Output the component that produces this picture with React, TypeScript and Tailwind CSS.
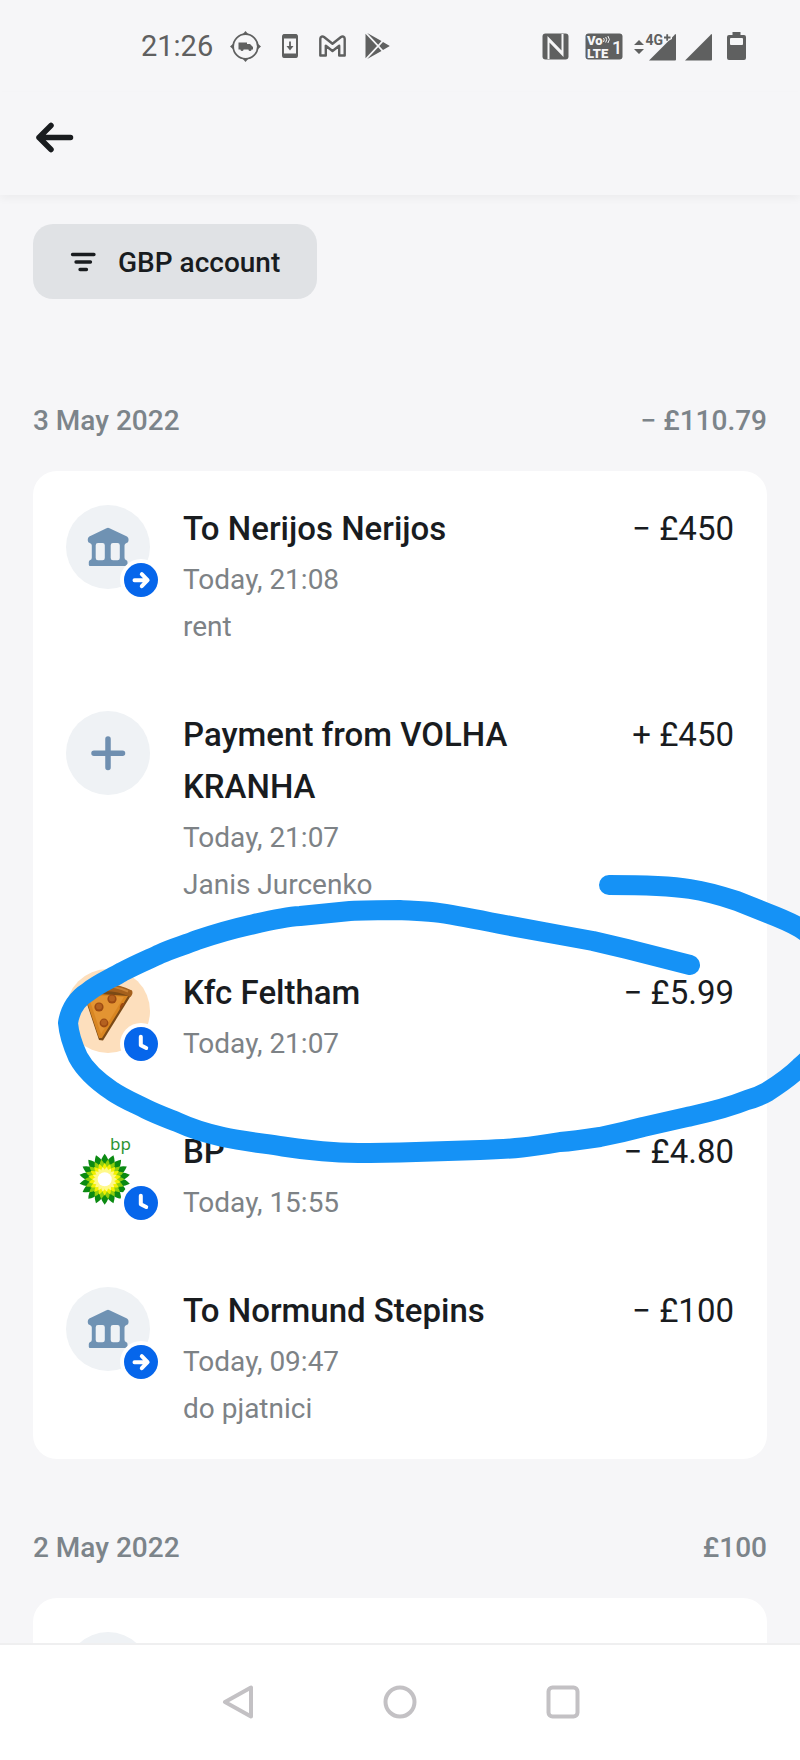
import React from 'react';

type AvatarKind = 'bank' | 'plus' | 'pizza' | 'bp';
type BadgeKind = 'arrow' | 'clock';

interface Transaction {
  title: string;
  time: string;
  note?: string;
  amount: string;
  avatar: AvatarKind;
  badge?: BadgeKind;
}

const transactions: Transaction[] = [
  { title: 'To Nerijos Nerijos', time: 'Today, 21:08', note: 'rent', amount: '− £450', avatar: 'bank', badge: 'arrow' },
  { title: 'Payment from VOLHA KRANHA', time: 'Today, 21:07', note: 'Janis Jurcenko', amount: '+ £450', avatar: 'plus' },
  { title: 'Kfc Feltham', time: 'Today, 21:07', amount: '− £5.99', avatar: 'pizza', badge: 'clock' },
  { title: 'BP', time: 'Today, 15:55', amount: '− £4.80', avatar: 'bp', badge: 'clock' },
  { title: 'To Normund Stepins', time: 'Today, 09:47', note: 'do pjatnici', amount: '− £100', avatar: 'bank', badge: 'arrow' }
];

const StatusBar = () => (
  <div className="flex h-[92px] flex-shrink-0 items-center justify-between pl-[141px] pr-[54px] text-[#5f6060]">
    <div className="flex items-center">
      <span className="text-[29px] leading-[40px]">21:26</span>
      {/* Delivery tracker */}
      <svg className="ml-[17px] h-[31px] w-[31px]" viewBox="0 0 31 31" fill="currentColor">
        <circle cx="15.5" cy="15.5" r="12.3" fill="none" stroke="currentColor" strokeWidth="1.7" />
        <path d="M15.5 0 19 4h-7zM15.5 31l3.5-4h-7zM0 15.5 4 12v7zM31 15.5 27 12v7z" />
        <path d="M8.500 11.500h8.500v1.500h3l3 3v2.500H8.500z" />
        <circle cx="12" cy="18.500" r="1.500" />
        <circle cx="20" cy="18.500" r="1.500" />
      </svg>
      {/* System update */}
      <svg className="ml-[21px] h-6 w-4" viewBox="0 0 16 24" fill="none" stroke="currentColor">
        <rect x="1" y="1" width="14" height="22" rx="1.5" strokeWidth="2" />
        <path d="M1 2.500h14M1 21.500h14" strokeWidth="4" />
        <path d="M8 7.500v7" strokeWidth="1.800" />
        <path d="M4.500 12h7L8 16.500z" fill="currentColor" stroke="none" />
      </svg>
      {/* Gmail */}
      <svg className="ml-[21px] h-[22px] w-[27px]" viewBox="0 0 27 22" fill="none" stroke="currentColor" strokeWidth="2.400" strokeLinejoin="round">
        <path d="M1.300 3.800C1.300 1.600 3.500.9 5 2l8.500 6.800L22 2c1.500-1.100 3.700-.4 3.700 1.800V20.500h-5.500V10.800l-6.700 5.200-6.700-5.200V20.500H1.300z" />
      </svg>
      {/* Play Store */}
      <svg className="ml-[19px] h-[26px] w-[25px]" viewBox="0 0 25 26" fill="currentColor">
        <path d="M.5.8v24.400L12 13zM2.200 0 16.500 8l-3.300 3.700zM2.200 26 16.500 18l-3.300-3.700zM18 9l6.800 4-6.800 4-3.700-4z" />
      </svg>
    </div>

    <div className="flex items-center">
      {/* NFC */}
      <svg className="h-[27px] w-[27px]" viewBox="0 0 27 27">
        <rect x=".5" y=".5" width="26" height="26" rx="3" fill="currentColor" />
        <path d="M6.500 26V5.500l13.500 14M20.500 1v20.500L7 7.500" fill="none" stroke="#f6f6f7" strokeWidth="2" />
      </svg>
      {/* VoLTE */}
      <svg className="ml-4 h-[27px] w-[38px]" viewBox="0 0 38 27">
        <rect x=".5" y=".5" width="37" height="26" rx="3" fill="currentColor" />
        <g fill="#f6f6f7" fontFamily="Roboto, sans-serif" fontWeight="900">
          <text x="2" y="12" fontSize="13">Vo</text>
          <text x="2" y="25" fontSize="13">LTE</text>
          <text x="27" y="20.500" fontSize="18" fontWeight="500">1</text>
        </g>
        <path d="M18.500 5q1.500 1.500 0 4M20.700 4q2 2.500 0 5.500M22.900 3q3 3.500 0 7" fill="none" stroke="#f6f6f7" strokeWidth="1" />
      </svg>
      {/* Mobile data and both SIM signals */}
      <svg className="ml-[10px] h-[29px] w-[80px]" viewBox="0 0 80 29" fill="currentColor">
        <path d="M1 13 6 8l5 5zM1 17l5 5 5-5z" />
        <path d="M16 28.500 42 2.500q1-1 1 0V27.500q0 1-1 1z" />
        <path d="M33 10V0h6v7z" fill="#f6f6f7" />
        <text x="12.500" y="12.500" fontSize="14" fontWeight="700" fontFamily="Roboto, sans-serif">4G</text>
        <path d="M31 5.500h6.500M34.200 2.200v6.600" stroke="currentColor" strokeWidth="1.800" />
        <path d="M52 28.500 78 2.500q1-1 1 0V27.500q0 1-1 1z" />
      </svg>
      {/* Battery */}
      <svg className="ml-[14px] h-[28px] w-[19px]" viewBox="0 0 19 28">
        <path d="M5.500 0h8v3H17q2 0 2 2v21q0 2-2 2H2q-2 0-2-2V5q0-2 2-2h3.500z" fill="currentColor" />
        <rect x="3" y="6" width="13" height="7" rx="1" fill="#f6f6f7" />
      </svg>
    </div>
  </div>
);

const BankIcon = () => (
  <svg className="h-[84px] w-[84px]" viewBox="0 0 84 84">
    <path
      d="M40.500 23.200q1.500-.8 3 0L61 31.500q1.500 1 1.500 2.600v1.400q0 2-2 2.500-2 .5-2 2.500V52.500q0 2 1.500 2.500t1.500 2V59.800q0 1.200-1.200 1.200H24q-1.200 0-1.200-1.200V57q0-1.500 1.500-2t1.500-2.500V40.500q0-2-2-2.500t-2-2.500V34.100q0-1.600 1.500-2.600z"
      fill="#6f92b3"
    />
    <path d="M32 38h4.500q2.300 0 2.300 2.300V53q0 2.300-2.300 2.300H32q-2.300 0-2.300-2.300V40.300q0-2.300 2.300-2.300zM47 38h4.500q2.300 0 2.300 2.300V53q0 2.300-2.300 2.300H47q-2.300 0-2.300-2.300V40.300q0-2.300 2.300-2.300z" fill="#eff2f5" />
  </svg>
);

const PlusIcon = () => (
  <svg className="h-[84px] w-[84px]" viewBox="0 0 84 84" fill="none" stroke="#6f8fb0" strokeWidth="5.500" strokeLinecap="round">
    <path d="M42 28v28.500M28 42.200h28.500" />
  </svg>
);

const PizzaIcon = () => (
  <svg className="h-[84px] w-[84px]" viewBox="0 0 84 84">
    <path d="M16 20Q40 10 66 22L64 28 37 71.500 33 71z" fill="#7b4a16" />
    <path d="M18 24 62 27 36 69 33 69z" fill="#d98622" />
    <path d="M22 26 58 28 35 65z" fill="#e39432" />
    <path d="M15 22Q40 9 66 21.500q1.500 3-1.500 6.500Q42 17 17 26z" fill="#a5601c" />
    <path d="M20 20Q40 13 62 22.500" fill="none" stroke="#c98236" strokeWidth="2" />
    <g fill="#9c4a12">
      <circle cx="46" cy="30" r="4.600" />
      <circle cx="33" cy="38" r="4.600" />
      <circle cx="38" cy="54" r="4.400" />
      <path d="M56 34q-3 3-2 7l5-7z" />
    </g>
    <g fill="#b4611f">
      <circle cx="46" cy="29.500" r="3" />
      <circle cx="33" cy="37.500" r="3" />
      <circle cx="38" cy="53.500" r="3" />
    </g>
  </svg>
);

const petals = Array.from({ length: 18 }, (_, i) => i * 20);

const BpIcon = () => (
  <svg className="h-[84px] w-[84px]" viewBox="0 0 84 84">
    <text x="44" y="22" fontSize="17" fill="#2c9432" fontFamily="'Noto Sans', sans-serif">bp</text>
    <g transform="translate(38.700 51.300)">
      {petals.map((a) => (
        <path key={a} d="M0-25.500Q4-20.500 4-16L0 0-4-16Q-4-20.500 0-25.500z" fill="#0b8a12" transform={`rotate(${a})`} />
      ))}
      {petals.map((a) => (
        <path key={a} d="M0-20Q2.400-17 2.600-13L0 0-2.600-13Q-2.400-17 0-20z" fill="#8fce0e" transform={`rotate(${a + 10})`} />
      ))}
      {petals.map((a) => (
        <path key={a} d="M0-16.500Q2.400-13 2.400-10L0 0-2.400-10Q-2.400-13 0-16.500z" fill="#f3f000" transform={`rotate(${a})`} />
      ))}
      {petals.map((a) => (
        <path key={a} d="M0-12.500Q2-10 2-8L0 0-2-8Q-2-10 0-12.500z" fill="#fff98a" transform={`rotate(${a + 10})`} />
      ))}
      <circle r="7" fill="#fff" />
    </g>
  </svg>
);

const icons: Record<AvatarKind, React.ReactNode> = {
  bank: <BankIcon />,
  plus: <PlusIcon />,
  pizza: <PizzaIcon />,
  bp: <BpIcon />
};

const getAvatarClass = (kind?: AvatarKind) => {
  switch (kind) {
    case 'pizza':
      return 'bg-[#fddfbd]';
    case 'bp':
      return 'bg-white';
    default:
      return 'bg-[#eff2f5]';
  }
};

const Avatar: React.FC<{ kind?: AvatarKind; badge?: BadgeKind }> = ({ kind, badge }) => (
  <div className={`relative mt-[2px] h-[84px] w-[84px] flex-shrink-0 rounded-full ${getAvatarClass(kind)}`}>
    {kind && icons[kind]}
    {badge && (
      <span className="absolute -bottom-2 -right-2 h-[34px] w-[34px] rounded-full bg-[#0666eb] ring-4 ring-white">
        <svg className="h-[34px] w-[34px]" viewBox="0 0 34 34" fill="none" stroke="#fff" strokeWidth="4" strokeLinecap="round" strokeLinejoin="round">
          {badge === 'arrow' ? <path d="M10.500 17.200H23M17.800 11.200l5.800 6-5.800 6" /> : <path d="M16.800 9.800v8.500l5.400 2.700" />}
        </svg>
      </span>
    )}
  </div>
);

const TransactionRow: React.FC<{ item: Transaction }> = ({ item }) => (
  <li className="flex gap-[33px] px-[33px] pb-[27px] pt-8">
    <Avatar kind={item.avatar} badge={item.badge} />
    <div className="min-w-0 flex-1">
      <h3 className="text-[33px] font-medium leading-[52px]">{item.title}</h3>
      <p className="mt-px text-[28px] leading-[47px] text-[#7d8286]">{item.time}</p>
      {item.note && <p className="text-[28px] leading-[47px] text-[#7d8286]">{item.note}</p>}
    </div>
    <span className="whitespace-nowrap text-[33px] leading-[52px]">{item.amount}</span>
  </li>
);

const DayHeading: React.FC<{ date: string; total: string }> = ({ date, total }) => (
  <div className="mb-[30px] flex justify-between text-[28px] font-medium leading-[40px] text-[#7c848a]">
    <h2>{date}</h2>
    <span>{total}</span>
  </div>
);

// Hand-drawn marker loop around the KFC payment
const MarkerLoop = () => (
  <svg className="pointer-events-none absolute left-0 top-[680px] h-[300px] w-[800px]" viewBox="0 875 800 300" fill="none" stroke="#1592f6" strokeWidth="20" strokeLinecap="round" strokeLinejoin="round">
    <path d="M609 885C635 885 665 885 690 889C710 892 725 897 737 901L767 913C780 918 790 922 800 928C850 958 850 1025 800 1067C790 1077 778 1085 767 1092C760 1096 755 1098 747 1100C725 1109 705 1113 687 1117L643 1127C628 1131 615 1134 600 1137C587 1139 574 1141 560 1142C530 1147 515 1149 480 1150L400 1152.500L370 1153C355 1153 345 1153 333 1152C315 1151 300 1149 283 1146.500C260 1143 242 1141 223 1137C205 1133 190 1128 177 1122C167 1118 156 1114 146 1109C134 1103 122 1098 112 1091C97 1081 85 1070 78 1057C73 1046 69 1035 68 1023C70 1009 78 998 88 992C98 984 110 979 122 972C135 965 147 960 160 954C173 948 185 945 197 940C215 934 232 929 250 925C267 921 283 917 300 916L350 911C367 910 383 910 400 910C415 911 428 911 440 913C460 916 480 920 500 924L560 935L593 941L627 949L690 965" />
  </svg>
);

const NavBar = () => (
  <nav className="flex h-[117px] flex-shrink-0 items-center justify-center gap-[129px] border-t-2 border-[#efeff0] bg-white pb-[2px]">
    <button type="button" aria-label="Back">
      <svg className="h-[34px] w-[34px]" viewBox="0 0 34 34" fill="none" stroke="#c3c1c4" strokeWidth="4" strokeLinejoin="round">
        <path d="M31 2.500V31.500L5 17z" />
      </svg>
    </button>
    <button type="button" aria-label="Home">
      <svg className="h-[34px] w-[34px]" viewBox="0 0 34 34" fill="none" stroke="#c3c1c4" strokeWidth="4">
        <circle cx="17" cy="17" r="14.500" />
      </svg>
    </button>
    <button type="button" aria-label="Recents">
      <svg className="h-[34px] w-[34px]" viewBox="0 0 34 34" fill="none" stroke="#c3c1c4" strokeWidth="4">
        <rect x="2.500" y="2.500" width="29" height="29" rx="4" />
      </svg>
    </button>
  </nav>
);

export default function App() {
  return (
    <div className="flex h-screen flex-col bg-[#f6f6f8] font-[Roboto,sans-serif] text-[#191c1f]">
      <StatusBar />

      <header className="relative z-10 flex h-[103px] flex-shrink-0 items-center bg-[#f6f6f8] px-[35px] pb-3 shadow-[0_4px_8px_rgba(0,0,0,0.04)]">
        <button type="button" aria-label="Go back">
          <svg className="h-[38px] w-[40px]" viewBox="0 0 40 38" fill="none" stroke="#191c1f" strokeWidth="5.500" strokeLinecap="round" strokeLinejoin="round">
            <path d="M35.500 18.500H4M16 6.500l-12 12 12 12" />
          </svg>
        </button>
      </header>

      <main className="relative min-h-0 flex-1 overflow-hidden px-[33px] pt-[29px]">
        <button type="button" className="flex h-[75px] items-center rounded-[20px] bg-[#e0e2e5] px-[37px] pt-[2px]">
          <svg className="h-[26px] w-[26px]" viewBox="0 0 26 26" fill="none" stroke="#191c1f" strokeWidth="3.300" strokeLinecap="round">
            <path d="M2.500 4.500h21.500M6 12h14.500M10 19.500h6.500" />
          </svg>
          <span className="ml-[22px] text-[28px] font-medium leading-[40px]">GBP account</span>
        </button>

        <section className="mt-[102px]">
          <DayHeading date="3 May 2022" total="− £110.79" />
          <ul className="rounded-3xl bg-white">
            {transactions.map((item, index) => (
              <TransactionRow key={index} item={item} />
            ))}
          </ul>
        </section>

        <section className="mt-[69px]">
          <DayHeading date="2 May 2022" total="£100" />
          <div className="rounded-3xl bg-white px-[33px] pb-[27px] pt-8">
            <Avatar />
          </div>
        </section>

        <MarkerLoop />
      </main>

      <NavBar />
    </div>
  );
}
